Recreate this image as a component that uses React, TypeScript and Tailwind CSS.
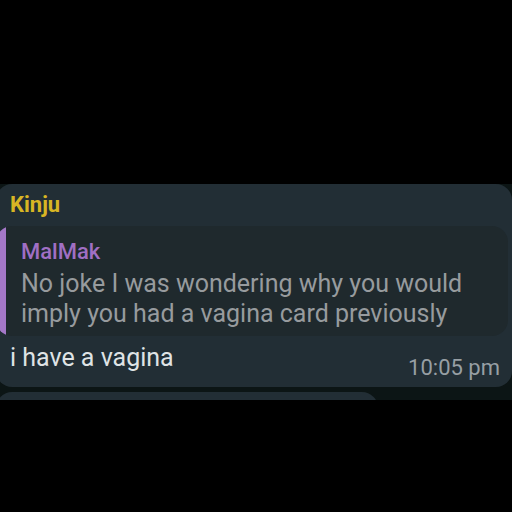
const quote = {
  author: 'MalMak',
  lines: [
    'No joke I was wondering why you would',
    'imply you had a vagina card previously',
  ],
};

function Quote() {
  return (
    <blockquote className="mr-1 flex overflow-hidden rounded-2xl bg-[#1f292d]">
      <div className="w-2.5 shrink-0 bg-[#a478c8]" />
      <div className="pt-2 pb-[7px] pl-[15px]">
        <cite className="block text-[22px] leading-[35px] font-medium text-[#a06fc4] not-italic">
          {quote.author}
        </cite>
        <p className="text-[25px] leading-[30px] whitespace-nowrap text-[#979b9e]">
          {quote.lines[0]}
          <br />
          {quote.lines[1]}
        </p>
      </div>
    </blockquote>
  );
}

function Message() {
  return (
    <article className="rounded-2xl bg-[#222e35]">
      <h2 className="px-3.5 text-[22px] leading-[42px] font-bold text-[#d8b524]">Kinju</h2>
      <Quote />
      <div className="flex items-end justify-between pr-3 pb-1 pl-3.5">
        <p className="pb-[3px] text-[25px] leading-[44px] text-[#dfe3e5]">i have a vagina</p>
        <time className="text-[22px] leading-[30px] text-[#979fa4]">10:05 pm</time>
      </div>
    </article>
  );
}

export default function App() {
  return (
    <main className="min-h-screen overflow-x-hidden bg-black pt-46 font-[Roboto,sans-serif]">
      <section className="-ml-1 overflow-hidden bg-[#0c1515]">
        <Message />
        <div className="mt-[5px] mr-[134px] h-2 overflow-hidden">
          <div className="h-10 rounded-2xl bg-[#222e35]" />
        </div>
      </section>
    </main>
  );
}
